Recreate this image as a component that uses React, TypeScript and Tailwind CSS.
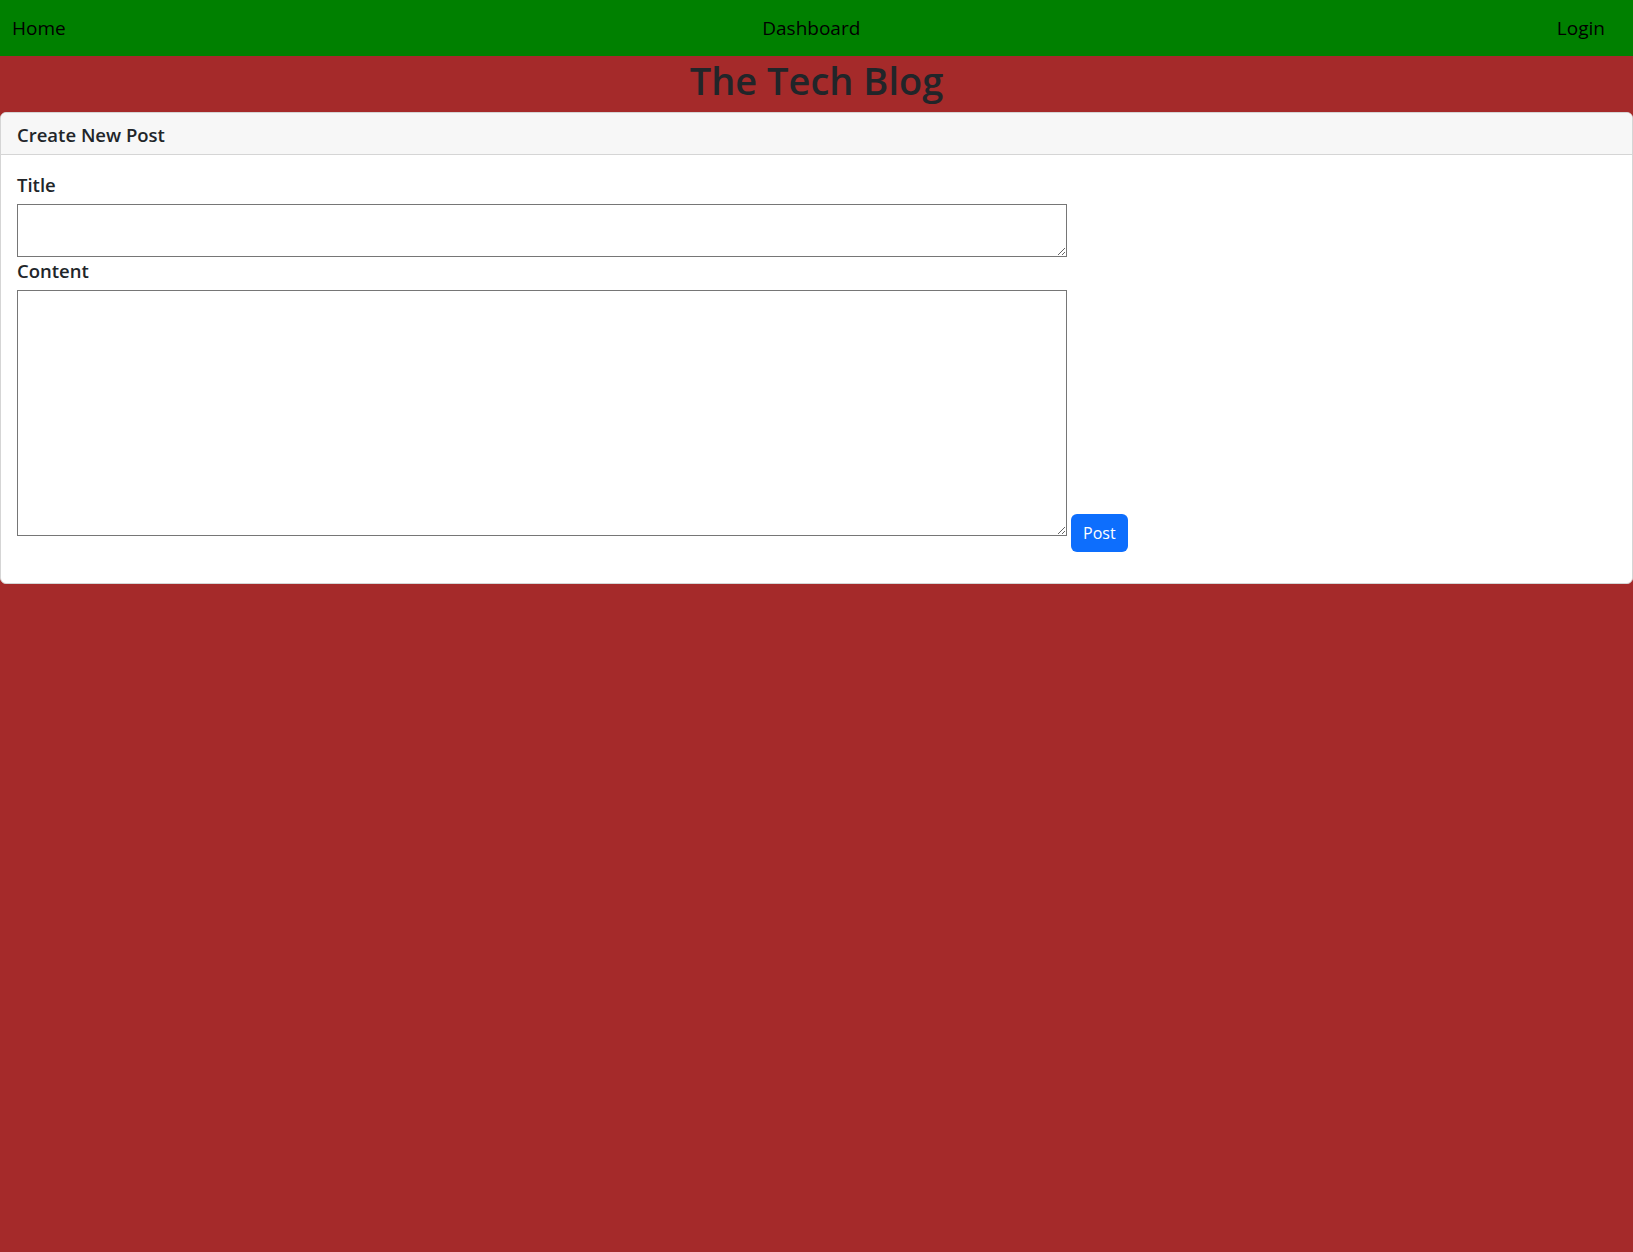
const links = ["Home", "Dashboard", "Login"];

export default function App() {
  return (
    <div className="min-h-screen bg-[#a52a2a] font-['Open_Sans',_'Noto_Sans',_sans-serif] text-[#212529]">
      <nav className="flex h-[56px] items-center justify-between bg-[#008000] pl-3 pr-[28px]">
        {links.map((link) => (
          <a key={link} href="#" className="text-[19px] leading-[28.5px] text-black">
            {link}
          </a>
        ))}
      </nav>

      <h1 className="mb-2 text-center text-[38px] font-semibold leading-[48px]">
        The Tech Blog
      </h1>

      <div className="rounded-md border border-[#d5d5d5] bg-white">
        <div className="rounded-t-[5px] border-b border-[#d5d5d5] bg-[#f7f7f7] px-4 pb-[7px] pt-[10px]">
          <h2 className="text-[18.5px] font-semibold leading-[24px]">Create New Post</h2>
        </div>

        <form className="px-4 pb-[31px] pt-4">
          <label htmlFor="title" className="mb-[5px] block text-[18.5px] font-semibold leading-[28px]">
            Title
          </label>
          <textarea
            id="title"
            className="block h-[53px] w-[1050px] resize border border-[#767676] bg-white"
          />

          <label htmlFor="content" className="mb-[5px] block text-[18.5px] font-semibold leading-[28px]">
            Content
          </label>
          <div className="flex items-end gap-1">
            <textarea
              id="content"
              className="mb-4 block h-[246px] w-[1050px] resize border border-[#767676] bg-white"
            />
            <button
              type="button"
              className="h-[38px] rounded-md bg-[#0d6efd] px-3 text-[16px] leading-6 text-white"
            >
              Post
            </button>
          </div>
        </form>
      </div>
    </div>
  );
}
